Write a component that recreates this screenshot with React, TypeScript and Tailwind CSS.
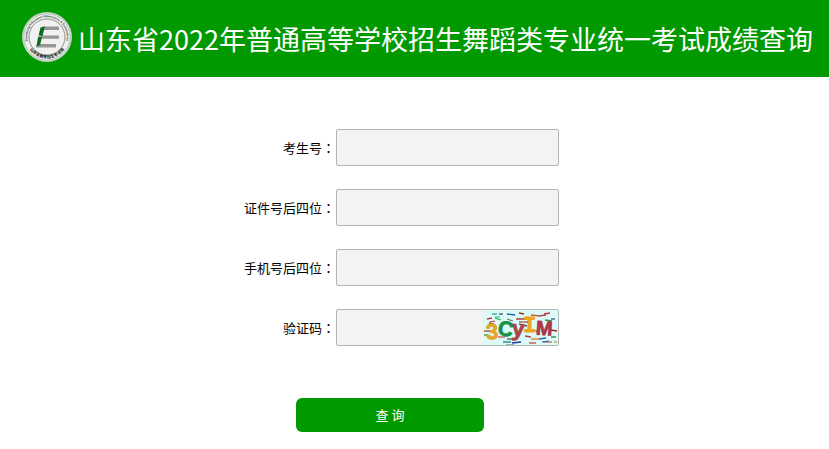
import { useState } from "react";

const FIELDS = [
  { id: "examNo", label: "考生号" },
  { id: "idTail", label: "证件号后四位" },
  { id: "phoneTail", label: "手机号后四位" },
];

const INPUT_CLASS =
  "h-[37px] w-[223px] rounded-xs border border-[#b5b5b5] bg-[#f3f3f3] px-2 text-sm outline-none";

// x, y, length, slope, colour
const NOISE: [number, number, number, number, string][] = [
  [9, 4, 5, 0, "#2a8"],
  [16, 4, 4, 0, "#446"],
  [24, 4, 8, 1, "#16a"],
  [36, 3, 5, 1, "#932"],
  [56, 6, 7, -1, "#a45"],
  [61, 4, 6, -1, "#c33"],
  [4, 9, 5, -1, "#c33"],
  [12, 8, 6, 2, "#2a5"],
  [6, 13, 5, 1, "#833"],
  [1, 21, 6, 0, "#a33"],
  [1, 25, 4, 0, "#393"],
  [24, 9, 6, 2, "#777"],
  [33, 9, 9, 0, "#a22"],
  [48, 5, 9, 1, "#b63"],
  [62, 10, 7, 1, "#393"],
  [68, 9, 4, 0, "#448"],
  [36, 14, 8, 2, "#555"],
  [15, 27, 7, 0, "#c55"],
  [20, 32, 8, 0, "#277"],
  [29, 33, 9, -1, "#23a"],
  [24, 29, 7, 0, "#363"],
  [42, 26, 6, 1, "#a44"],
  [48, 29, 8, 0, "#d73"],
  [46, 33, 7, 0, "#c44"],
  [56, 29, 7, -1, "#26a"],
  [60, 32, 9, 0, "#c65"],
  [68, 27, 5, 0, "#373"],
  [68, 20, 6, 1, "#a22"],
  [50, 20, 6, 2, "#555"],
  [71, 32, 3, 0, "#c93"],
];

function Logo() {
  return (
    <svg className="size-[50px] shrink-0" viewBox="0 0 50 50" role="img" aria-label="山东省教育招生考试院">
      <defs>
        <path id="ring-top" d="M6.6 32A19.7 19.7 0 1 1 43.4 32" />
        <path id="ring-bottom" d="M6 34.5A21.2 21.2 0 0 0 44 34.5" />
      </defs>
      <circle cx="25" cy="25" r="24.5" fill="#eef1ee" stroke="#b9c9b9" />
      <circle cx="25" cy="25" r="23.2" fill="none" stroke="#8a9a8a" strokeWidth="0.6" />
      <circle cx="25" cy="25" r="18" fill="#f1f1f1" stroke="#6f7a70" strokeWidth="0.8" />
      <text fill="#2f3b30" fontFamily="Liberation Sans, sans-serif" fontSize="3" fontWeight="bold">
        <textPath href="#ring-top" startOffset="50%" textAnchor="middle">
          Shandong Education Admissions &amp; Examination
        </textPath>
      </text>
      <text fill="#101810" fontFamily="Noto Sans CJK SC, sans-serif" fontSize="4" fontWeight="bold">
        <textPath href="#ring-bottom" startOffset="50%" textAnchor="middle">
          山东省教育招生考试院
        </textPath>
      </text>
      <path d="M20.5 14.5H37V18H20zM19 23.5H37V26.8H18zM17 32H34V35.5H15z" fill="#969696" />
      <path d="M18.5 15.5L22.8 14.5L20.6 24L16.6 23.5zM16.2 24.5L20 25L18.2 32.5L14.2 35.5z" fill="#0b6a22" />
    </svg>
  );
}

function Captcha() {
  return (
    <svg className="h-[35px] w-[75px]" viewBox="0 0 75 35" role="img" aria-label="验证码">
      <rect width="75" height="35" fill="#dcfbf8" />
      {NOISE.map(([x, y, length, slope, color]) => (
        <path key={`${x}-${y}`} d={`M${x} ${y}l${length} ${slope}`} stroke={color} strokeWidth="1.3" />
      ))}
      <g fontFamily="Liberation Sans, sans-serif" fontWeight="bold" strokeWidth="0.8">
        <text x="3" y="29" fontSize="22" fill="#e5a52c" stroke="#e5a52c" transform="rotate(-4 9 21)">3</text>
        <text x="15" y="26" fontSize="21" fill="#16924a" stroke="#16924a" transform="rotate(12 23 19)">C</text>
        <text x="29" y="26" fontSize="22" fill="#ac4548" stroke="#ac4548" transform="rotate(5 35 20)">y</text>
        <text x="40" y="22" fontSize="22" fill="#f0a51c" stroke="#f0a51c" fontFamily="Liberation Mono, monospace">
          I
        </text>
        <text x="53" y="25" fontSize="20" fill="#ac3548" stroke="#ac3548" transform="rotate(4 61 19)">M</text>
      </g>
      {NOISE.filter((_, i) => i % 6 === 0).map(([x, y, length, slope, color]) => (
        <path key={`${x}-${y}-top`} d={`M${x + 3} ${y + 3}l${length} ${slope}`} stroke={color} />
      ))}
    </svg>
  );
}

function FieldLabel({ id, text }: { id: string; text: string }) {
  return (
    <label htmlFor={id} className="pr-px text-right text-[13px] leading-5 text-black">
      {text}
      <span className="font-['Noto_Sans_CJK_TC',sans-serif]">：</span>
    </label>
  );
}

export default function App() {
  const [values, setValues] = useState<Record<string, string>>({});

  const update = (id: string, value: string) => setValues((prev) => ({ ...prev, [id]: value }));

  return (
    <div className="min-h-screen bg-white font-['Noto_Sans_CJK_SC',sans-serif]">
      <header className="flex h-[77px] items-center gap-1.5 bg-[#009900] pr-4 pb-1 pl-[22px]">
        <Logo />
        <h1 className="mt-1 text-[27px] leading-9 whitespace-nowrap text-white">
          山东省2022年普通高等学校招生舞蹈类专业统一考试成绩查询
        </h1>
      </header>

      <form className="pt-[52px]" onSubmit={(e) => e.preventDefault()}>
        <div className="grid grid-cols-[15fr_22fr] items-center gap-y-[23px]">
          {FIELDS.map((field) => (
            <div key={field.id} className="contents">
              <FieldLabel id={field.id} text={field.label} />
              <input
                id={field.id}
                className={INPUT_CLASS}
                type="text"
                value={values[field.id] ?? ""}
                onChange={(e) => update(field.id, e.target.value)}
              />
            </div>
          ))}
          <FieldLabel id="captcha" text="验证码" />
          <div className="relative w-[223px]">
            <input
              id="captcha"
              className={`${INPUT_CLASS} block pr-20`}
              type="text"
              value={values.captcha ?? ""}
              onChange={(e) => update("captcha", e.target.value)}
            />
            <div className="absolute top-px right-px">
              <Captcha />
            </div>
          </div>
        </div>

        <div className="mt-[52px] flex justify-center pr-[49px]">
          <button
            className="h-[34px] w-[188px] rounded-md bg-[#009900] text-[13px] text-white hover:bg-[#008800]"
            type="submit"
          >
            查 询
          </button>
        </div>
      </form>
    </div>
  );
}
